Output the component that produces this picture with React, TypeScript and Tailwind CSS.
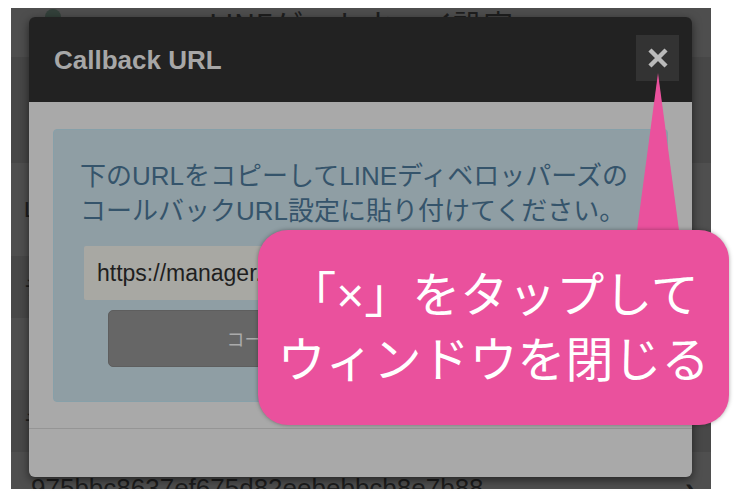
import React from "react";

function CloseIcon() {
  return (
    <svg width="20" height="20" viewBox="0 0 20 20">
      <path d="M3.5 3.5 L16.5 16.5 M16.5 3.5 L3.5 16.5" stroke="#bababa" strokeWidth="4.4" strokeLinecap="square" />
    </svg>
  );
}

function BackgroundPage() {
  return (
    <div className="w-[700px] h-[481px] overflow-hidden flex flex-col bg-[#4b4b4b] font-['Liberation_Sans','Noto_Sans_CJK_JP',sans-serif] text-[#1d1d1d]">
      <div className="h-[49px] shrink-0 bg-[#4e4e4e] relative flex justify-center">
        <span className="absolute left-[34px] top-[1px] w-[16px] h-[16px] rounded-full bg-[#33403a]"></span>
        <span className="text-[30px] leading-[30px] font-['Noto_Sans_CJK_JP',sans-serif] text-[#1e1e1e]">LINEゲートウェイ設定</span>
      </div>
      <div className="h-[106px] shrink-0 bg-[#474747]"></div>
      <div className="h-[93px] shrink-0 bg-[#4f4f4f] flex items-center px-[13px] text-[22px]">LINE Channel ID</div>
      <div className="h-[62px] shrink-0 bg-[#484848] flex items-center px-[13px] text-[22px]">チャネルID</div>
      <div className="h-[72px] shrink-0 bg-[#4f4f4f]"></div>
      <div className="h-[62px] shrink-0 bg-[#484848] flex items-center px-[13px] text-[22px]">チャネルシークレット</div>
      <div className="h-[60px] shrink-0 bg-[#4f4f4f] flex items-start justify-between pl-[20px] pr-[16px] pt-[21px] text-[26px] leading-[30px]">
        <span>975bbc8637ef675d82eebebbcb8e7b88</span>
        <span className="text-[30px] font-bold">›</span>
      </div>
    </div>
  );
}

function Modal() {
  return (
    <div className="absolute left-[29px] top-[17px] w-[663px] h-[460px] rounded-[6px] overflow-hidden shadow-[0_3px_10px_rgba(0,0,0,0.55)] flex flex-col">
      <div className="h-[85px] shrink-0 bg-[#222222] flex items-center justify-between pl-[25px] pr-[13px]">
        <h2 className="text-[26px] font-bold text-[#a7a7a7] font-['Liberation_Sans',sans-serif] leading-none">Callback URL</h2>
        <button className="w-[43px] h-[46px] -mt-[3px] bg-[#333333] flex items-center justify-center">
          <CloseIcon />
        </button>
      </div>
      <div className="h-[326px] shrink-0 bg-[#a9a9a9] px-[24px] pt-[27px] pb-[26px]">
        <div className="h-[273px] border border-[#87a0a9] rounded-[4px] bg-[#8f9ea4] px-[26px] pt-[29px] pb-[34px] flex flex-col">
          <p className="text-[26px] leading-[35px] text-[#35546b] font-['Liberation_Sans','Noto_Sans_CJK_JP',sans-serif] whitespace-nowrap">
            下のURLをコピーしてLINEディベロッパーズの
            <br />
            コールバックURL設定に貼り付けてください。
          </p>
          <div className="mt-[17px] mx-[4px] h-[54px] shrink-0 bg-[#a8a8a3] rounded-[2px] flex items-center px-[13px] overflow-hidden">
            <span className="text-[23px] text-[#1f1f1f] font-['Liberation_Sans',sans-serif] whitespace-nowrap">https://manager.example.jp/line/callback</span>
          </div>
          <button className="mt-[10px] mx-[28px] h-[57px] shrink-0 rounded-[5px] bg-[#666666] text-[18px] text-[#ababab] font-['Noto_Sans_CJK_JP',sans-serif] border border-[#5e5e5e]">
            コールバックURLをコピーします
          </button>
        </div>
      </div>
      <div className="flex-1 bg-[#a9a9a9] border-t border-[#959595]"></div>
    </div>
  );
}

function Callout() {
  return (
    <>
      <svg className="absolute left-[630px] top-[70px]" width="56" height="170" viewBox="0 0 56 170">
        <polygon points="28,3 6,168 50,168" fill="#ea519d" />
      </svg>
      <div className="absolute left-[258px] top-[230px] w-[471px] h-[195px] rounded-[30px] bg-[#ea519d] shadow-[0_0_4px_rgba(0,0,0,0.35)] flex flex-col items-center justify-center pb-[8px] text-white text-[48px] leading-[60px] font-['Noto_Sans_CJK_JP',sans-serif]">
        <span>
          「<span className="font-['Liberation_Sans',sans-serif]">×</span>」をタップして
        </span>
        <span>ウィンドウを閉じる</span>
      </div>
    </>
  );
}

export default function App() {
  return (
    <div className="relative w-[740px] h-[498px] bg-white overflow-hidden pt-[8px] pl-[11px]">
      <BackgroundPage />
      <Modal />
      <Callout />
    </div>
  );
}
